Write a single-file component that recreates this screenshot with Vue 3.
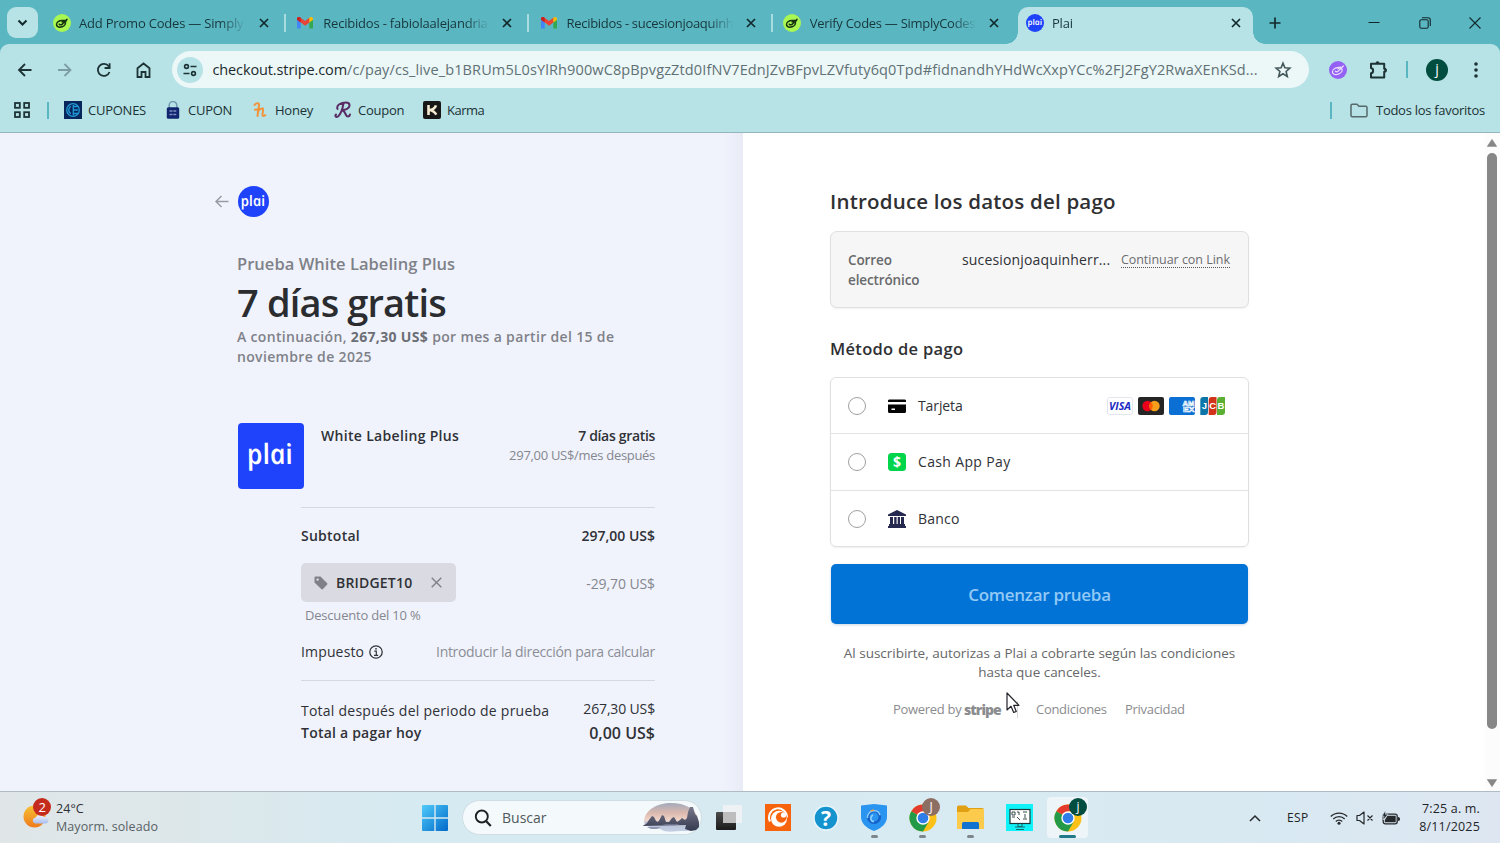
<script setup>
const tabs = [
  { title: 'Add Promo Codes — Simply', icon: 'simply', cls: 't1' },
  { title: 'Recibidos - fabiolaalejandria', icon: 'gmail', cls: 't2' },
  { title: 'Recibidos - sucesionjoaquinh', icon: 'gmail', cls: 't3' },
  { title: 'Verify Codes — SimplyCodes', icon: 'simply', cls: 't4' },
  { title: 'Plai', icon: 'plai', cls: 't5', active: true }
]

const bookmarks = [
  { name: 'CUPONES', icon: 'cupones' },
  { name: 'CUPON', icon: 'lock' },
  { name: 'Honey', icon: 'honey' },
  { name: 'Coupon', icon: 'coupon' },
  { name: 'Karma', icon: 'karma' }
]

const methods = [
  { name: 'Tarjeta', icon: 'card' },
  { name: 'Cash App Pay', icon: 'cash' },
  { name: 'Banco', icon: 'bank' }
]

const apps = [
  { icon: 'taskview' },
  { icon: 'crunchy' },
  { icon: 'help' },
  { icon: 'shield', running: true },
  { icon: 'chrome', running: true, badge: 'J' },
  { icon: 'folder', running: true },
  { icon: 'monitor' },
  { icon: 'chrome', active: true, badge: 'j' }
]
</script>

<template>
  <div class="screen">
    <!-- Tab strip -->
    <div class="tabstrip">
      <div class="tab-search">
        <svg width="31" height="31" viewBox="0 0 31 31"><path d="M11.5 13.5l4 4 4-4" fill="none" stroke="#12292c" stroke-width="2" /></svg>
      </div>
      <template v-for="(tab, i) in tabs" :key="i">
        <div class="tab" :class="{ active: tab.active }">
          <svg v-if="tab.icon === 'simply'" class="favicon" viewBox="0 0 18 18">
            <circle cx="9" cy="9" r="9" fill="#a9f752" />
            <g fill="none" stroke="#16330f" stroke-width="1.5" stroke-linecap="round">
              <ellipse cx="8" cy="9.8" rx="4.6" ry="3.2" transform="rotate(-20 8 9.8)" />
              <path d="M6.3 10.2c1 1.3 3 .5 4-1.2l3.7-3.8M9 7.8l2.2-1.4M11.5 8.6l2-2.2" />
            </g>
          </svg>
          <svg v-else-if="tab.icon === 'gmail'" class="favicon" viewBox="0 0 18 18">
            <path d="M1 5v9.5h3.7V8z" fill="#4285f4" />
            <path d="M17 5v9.5h-3.7V8z" fill="#34a853" />
            <path d="M1 4.8C1 3 3 2.4 4.3 3.4L9 7l4.7-3.600v4.8L9 11.7 4.7 8.3 1 5.8z" fill="#ea4335" />
            <path d="M13.3 3.7C15 2.4 17 3 17 5l-.1 1-3.6 2.6z" fill="#fbbc04" />
            <path d="M1 4.8C1 3 3 2.4 4.7 3.7v4.7L1 5.8z" fill="#c5221f" />
          </svg>
          <svg v-else class="favicon" viewBox="0 0 18 18">
            <circle cx="9" cy="9" r="9" fill="#1f43fb" />
            <text class="plai" transform="translate(2 11.2) skewX(12)" font-size="8" textLength="14.5" lengthAdjust="spacingAndGlyphs">plai</text>
          </svg>
          <span class="tab-title" :class="tab.cls">{{ tab.title }}</span>
          <svg class="tab-close" viewBox="0 0 10 10"><path d="M1 1l8 8M9 1l-8 8" stroke="#12292c" stroke-width="1.7" /></svg>
        </div>
        <span v-if="i < 4" class="tab-sep" :class="{ hidden: i === 3 }"></span>
      </template>
      <svg class="new-tab" viewBox="0 0 12 12"><path d="M6 .5v11M.5 6h11" stroke="#12292c" stroke-width="1.7" /></svg>
      <div class="window-controls">
        <svg viewBox="0 0 12 12"><path d="M.5 5.5h11" stroke="#12292c" /></svg>
        <svg viewBox="0 0 12 12"><g fill="none" stroke="#12292c" stroke-width="1.1"><rect x=".8" y="2.8" width="8.4" height="8.4" rx="1.5" /><path d="M3 .8h6a2.3 2.3 0 0 1 2.3 2.3V9" /></g></svg>
        <svg viewBox="0 0 12 12"><path d="M.5.5l11 11M11.5.5l-11 11" stroke="#12292c" stroke-width="1.1" /></svg>
      </div>
    </div>

    <!-- Toolbar -->
    <div class="chrome-body">
      <div class="toolbar">
        <div class="nav">
          <svg viewBox="0 0 20 20"><path d="M16.5 10H4.5M10 4l-6 6 6 6" fill="none" stroke="#1c3235" stroke-width="1.8" /></svg>
          <svg viewBox="0 0 20 20"><path d="M3 10h12M9.500 4l6 6-6 6" fill="none" stroke="#7c9da1" stroke-width="1.8" /></svg>
          <svg viewBox="0 0 20 20"><path d="M15.5 12a6 6 0 1 1-.8-5.7l1 1.3" fill="none" stroke="#1c3235" stroke-width="1.8" /><path d="M15.6 3.2v4.8h-5" fill="none" stroke="#1c3235" stroke-width="1.8" /></svg>
          <svg viewBox="0 0 20 20"><path d="M3.5 8.2L9.5 3.5l6 4.7V17h-4v-5h-4v5h-4z" fill="none" stroke="#1c3235" stroke-width="1.8" /></svg>
        </div>
        <div class="omnibox">
          <span class="site-info">
            <svg width="16" height="16" viewBox="0 0 16 16"><g fill="none" stroke="#1c3235" stroke-width="1.6"><circle cx="4.5" cy="4.5" r="1.9" /><path d="M8.5 4.5h6M1.5 11.5h6" /><circle cx="11.5" cy="11.5" r="1.9" /></g></svg>
          </span>
          <span class="url"><b>checkout.stripe.com</b>/c/pay/cs_live_b1BRUm5L0sYlRh900wC8pBpvgzZtd0IfNV7EdnJZvBFpvLZVfuty6q0Tpd#fidnandhYHdWcXxpYCc%2FJ2FgY2RwaXEnKSd...</span>
          <svg class="star" viewBox="0 0 18 18"><path d="M9 2.200l1.900 4.600 5 .4-3.800 3.300 1.200 4.900L9 12.700l-4.300 2.700 1.200-4.900L2.100 7.200l5-.4z" fill="none" stroke="#42575a" stroke-width="1.6" /></svg>
        </div>
        <svg class="ext" viewBox="0 0 18 18">
          <circle cx="9" cy="9" r="9" fill="#9461f4" />
          <g fill="none" stroke="#e9dcff" stroke-width="1.3" stroke-linecap="round">
            <ellipse cx="8.3" cy="10" rx="5" ry="3.3" transform="rotate(-20 8.3 10)" />
            <path d="M6.3 10.2c1 1.3 3 .5 4-1.2l4-4M9 7.8l2.2-1.8" />
          </g>
        </svg>
        <svg class="puzzle" viewBox="0 0 20 20"><path d="M2.5 3.800h13.200v5c2 0 2 3 0 3v5.700H2.500v-4.300c2.800-.4 2.800-4.700 0-5.100z" fill="none" stroke="#1c3235" stroke-width="2" stroke-linejoin="round" /><path d="M7 3.500a2 2.300 0 0 1 4 0zM16 8a2.200 2.200 0 0 1 0 4.500z" fill="#1c3235" /></svg>
        <span class="v-sep"></span>
        <span class="avatar">j</span>
        <svg class="kebab" viewBox="0 0 4 16"><g fill="#1c3235"><circle cx="2" cy="2" r="1.8" /><circle cx="2" cy="8" r="1.8" /><circle cx="2" cy="14" r="1.8" /></g></svg>
      </div>

      <!-- Bookmarks -->
      <div class="bookmarks">
        <svg class="apps-icon" viewBox="0 0 16 16"><g fill="none" stroke="#1c3235" stroke-width="1.8"><rect x="1" y="1" width="4.8" height="4.8" /><rect x="10.2" y="1" width="4.8" height="4.8" /><rect x="1" y="10.2" width="4.8" height="4.8" /><rect x="10.2" y="10.2" width="4.8" height="4.8" /></g></svg>
        <span class="v-sep"></span>
        <div class="bookmark-list">
          <div v-for="b in bookmarks" :key="b.name" class="bookmark" :class="b.icon">
            <svg v-if="b.icon === 'cupones'" viewBox="0 0 18 18"><rect width="18" height="18" fill="#06265c" /><g fill="none" stroke="#2299d6" stroke-width="1.3"><circle cx="9" cy="9" r="6.3" /><path d="M9.3 4v10.5M9.3 5.500h4.500M9.300 9h4.500M9.300 12.500h4.500M7 5.500c-3 1-3 6 0 7" /></g></svg>
            <svg v-else-if="b.icon === 'lock'" viewBox="0 0 18 18"><path d="M5.2 7V4.200a3.800 3.600 0 0 1 7.600 0V7" fill="none" stroke="#6f9ab0" stroke-width="1.5" /><rect x="2.8" y="6.2" width="12.4" height="11.5" rx="1.5" fill="#10246f" /><path d="M5.5 10h7M5.500 13.500h7" stroke="#7f8fc4" stroke-width="1.3" stroke-dasharray="3 .8" /></svg>
            <svg v-else-if="b.icon === 'honey'" viewBox="0 0 18 18"><path d="M3.5 4c2-2.500 5-2.500 4.500.5L6.500 15M7 10.500c1.500-3 5.500-4 5-.5-.3 2.500-1.200 5 .5 5 1 0 1.500-.5 1.800-1M4 8.800l8-1.300" fill="none" stroke="#f0943c" stroke-width="2" stroke-linecap="round" /></svg>
            <svg v-else-if="b.icon === 'coupon'" viewBox="0 0 18 18"><path d="M9.5 2.500C8.500 8 7 13 4 15.500c-2 1.200-3.300-.5-2-2M3.500 8C2 4 7 1.500 12 1.500c4.500 0 5 5-.5 7-1.500.5-3 .5-3.500.5 2.500.5 3 3 4 5 1 2.200 3.500 2 4-.5" fill="none" stroke="#5a2c66" stroke-width="2" stroke-linecap="round" /></svg>
            <svg v-else viewBox="0 0 18 18"><rect width="18" height="18" rx="2" fill="#171717" /><path d="M5.5 4v10M13 4.300c-1 3-3.500 4.500-7 4.700 3 .2 5.500 1.500 7.300 4.700" fill="none" stroke="#f4ead2" stroke-width="2.6" /></svg>
            <span>{{ b.name }}</span>
          </div>
        </div>
        <span class="v-sep"></span>
        <svg class="fav-folder" viewBox="0 0 18 15"><path d="M1 2.500A1.200 1.200 0 0 1 2.200 1.300H7l2 2h7A1.200 1.200 0 0 1 17 4.500v8A1.200 1.200 0 0 1 16 13.700H2.200A1.200 1.200 0 0 1 1 12.500z" fill="none" stroke="#56696b" stroke-width="1.5" /></svg>
        <span class="all-favs">Todos los favoritos</span>
      </div>
    </div>

    <!-- Checkout page -->
    <div class="page">
      <section class="summary">
        <div class="merchant">
          <svg width="14" height="13" viewBox="0 0 14 13"><path d="M13.5 6.5H1.2M6.5 1l-5.5 5.500 5.500 5.500" fill="none" stroke="#989ba3" stroke-width="1.5" /></svg>
          <svg width="31" height="31" viewBox="0 0 31 31"><circle cx="15.5" cy="15.5" r="15.5" fill="#1f43fb" /><text class="plai" transform="translate(3.5 19.5) skewX(12)" font-size="14.5" textLength="24.5" lengthAdjust="spacingAndGlyphs">plai</text></svg>
        </div>
        <div class="summary-body">
          <div class="product-name">Prueba White Labeling Plus</div>
          <div class="headline">7 días gratis</div>
          <div class="then">A continuación, <b>267,30 US$</b> por mes a partir del 15 de<br />noviembre de 2025</div>

          <div class="item">
            <svg width="66" height="66" viewBox="0 0 66 66"><rect width="66" height="66" rx="4" fill="#1f43fb" /><text class="plai" transform="translate(10.500 41) skewX(12)" font-size="28" textLength="46" lengthAdjust="spacingAndGlyphs">plai</text></svg>
            <span class="item-title">White Labeling Plus</span>
            <div class="item-price">
              <span class="free">7 días gratis</span>
              <span class="after">297,00 US$/mes después</span>
            </div>
          </div>

          <div class="totals">
            <div class="row subtotal"><span class="label">Subtotal</span><span class="value">297,00 US$</span></div>
            <div class="row promo">
              <span class="chip">
                <svg width="14" height="14" viewBox="0 0 14 14"><path d="M.5 1.800C.5 1 1 .5 1.800.5h4.700L13 7c.6.6.6 1.200 0 1.800L9 13c-.6.6-1.200.6-1.800 0L.5 6.500z" fill="#808188" /><circle cx="3.6" cy="3.6" r="1.2" fill="#dadbe2" /></svg>
                <span class="code">BRIDGET10</span>
                <svg width="11" height="11" viewBox="0 0 11 11"><path d="M.7.7l9.600 9.600M10.300.7L.7 10.300" stroke="#808188" stroke-width="1.4" /></svg>
              </span>
              <span class="discount">-29,70 US$</span>
            </div>
            <div class="promo-note">Descuento del 10 %</div>
            <div class="row tax">
              <span class="tax-label"><span>Impuesto</span><svg width="14" height="14" viewBox="0 0 14 14"><circle cx="7" cy="7" r="6.2" fill="none" stroke="#33353a" stroke-width="1.3" /><path d="M5.3 6.200h2v4M5 10.300h4.200" fill="none" stroke="#33353a" stroke-width="1.2" /><circle cx="7" cy="3.8" r=".9" fill="#33353a" /></svg></span>
              <span class="tax-value">Introducir la dirección para calcular</span>
            </div>
            <div class="row trial"><span class="label">Total después del periodo de prueba</span><span class="value">267,30 US$</span></div>
            <div class="row today"><span class="label">Total a pagar hoy</span><span class="value">0,00 US$</span></div>
          </div>
        </div>
      </section>

      <section class="payment">
        <h1>Introduce los datos del pago</h1>
        <div class="email-box">
          <span class="email-label">Correo<br />electrónico</span>
          <span class="email">sucesionjoaquinherr...</span>
          <span class="link">Continuar con Link</span>
        </div>
        <h2>Método de pago</h2>
        <div class="methods">
          <div v-for="m in methods" :key="m.icon" class="method">
            <span class="radio"></span>
            <svg v-if="m.icon === 'card'" class="m-icon" viewBox="0 0 18 18"><path d="M0 3.500a1.500 1.500 0 0 1 1.500-1h15a1.500 1.500 0 0 1 1.500 1V5H0zM0 7.500h18V14.500a1.500 1.500 0 0 1-1.500 1.500h-15a1.500 1.500 0 0 1-1.500-1.500zM3.500 11.500v1.500h3.500v-1.500z" fill-rule="evenodd" fill="#050505" /></svg>
            <svg v-else-if="m.icon === 'cash'" class="m-icon" viewBox="0 0 18 18"><rect width="18" height="18" rx="3.5" fill="#00d54b" /><text x="9" y="14" text-anchor="middle" font-family="Open Sans" font-weight="700" font-size="14" fill="#fff">$</text></svg>
            <svg v-else class="m-icon" viewBox="0 0 18 18"><path d="M9 0l9 4.500V6H0V4.500zM2 7h3v7H2zM6.200 7h2.400v7H6.200zM9.700 7H12v7H9.700zM13 7h3v7h-3zM1 14h16v2H1zM0 16h18v2H0z" fill="#25284f" /></svg>
            <span class="m-name" :class="m.icon">{{ m.name }}</span>
            <div v-if="m.icon === 'card'" class="brands">
              <svg viewBox="0 0 26 18"><rect x=".5" y=".5" width="25" height="17" rx="2" fill="#fff" stroke="#e3e5ee" /><text x="2" y="12.6" font-family="Open Sans" font-weight="700" font-style="italic" font-size="10" textLength="22" lengthAdjust="spacingAndGlyphs" fill="#1a2ac4">VISA</text></svg>
              <svg viewBox="0 0 26 18"><rect width="26" height="18" rx="2" fill="#252525" /><circle cx="9.5" cy="9" r="5.2" fill="#eb001b" /><circle cx="16.5" cy="9" r="5.2" fill="#f79e1b" /><path d="M13 5.100a5.200 5.200 0 0 1 0 7.800 5.200 5.200 0 0 1 0-7.800z" fill="#ff5f00" /></svg>
              <svg viewBox="0 0 26 18"><rect width="26" height="18" rx="2" fill="#0b6fd4" /><g font-family="Liberation Sans" font-weight="700" font-size="8" fill="#0b6fd4" stroke="#fff" stroke-width=".7"><text x="13.5" y="9" textLength="12" lengthAdjust="spacingAndGlyphs">AM</text><text x="14" y="15.4" textLength="11.5" lengthAdjust="spacingAndGlyphs">EX</text></g></svg>
              <svg viewBox="0 0 26 18"><path d="M3 0h5v15a3 3 0 0 1-3 3H.3V3A3 3 0 0 1 3 0z" fill="#0d76a8" /><path d="M11.700 0h4.800v15a3 3 0 0 1-3 3H8.700V3a3 3 0 0 1 3-3z" fill="#d1331b" /><path d="M20 0h5v15a3 3 0 0 1-3 3h-5V3a3 3 0 0 1 3-3z" fill="#5bb033" /><g font-family="Liberation Sans" font-weight="700" font-size="9.5" text-anchor="middle" fill="#fff"><text x="4.500" y="12.3">J</text><text x="12.600" y="12.3">C</text><text x="21" y="12.3">B</text></g></svg>
            </div>
          </div>
        </div>
        <div class="submit">Comenzar prueba</div>
        <p class="terms">Al suscribirte, autorizas a Plai a cobrarte según las condiciones<br />hasta que canceles.</p>
        <div class="footer">
          <span class="powered">Powered by</span><span class="stripe">stripe</span><span class="f-sep"></span><span class="cond">Condiciones</span><span class="priv">Privacidad</span>
        </div>
      </section>

      <div class="scrollbar">
        <svg width="10" height="8" viewBox="0 0 10 8"><path d="M5 .3L9.800 7.500H.2z" fill="#878787" stroke="#878787" stroke-width=".5" stroke-linejoin="round" /></svg>
        <span class="thumb"></span>
        <svg width="10" height="8" viewBox="0 0 10 8"><path d="M5 7.700L9.800.5H.2z" fill="#878787" stroke="#878787" stroke-width=".5" stroke-linejoin="round" /></svg>
      </div>

      <svg class="cursor" viewBox="0 0 14 22"><path d="M1 1v17l4-3.700 2.700 6.200 2.600-1.100L7.700 13.300h5.300z" fill="#fff" stroke="#23232b" stroke-width="1.2" stroke-linejoin="round" /></svg>
    </div>

    <!-- Taskbar -->
    <div class="taskbar">
      <div class="weather">
        <svg width="30" height="32" viewBox="0 0 30 32">
          <defs>
            <linearGradient id="sun" x1="0" y1="0" x2="0" y2="1"><stop offset="0" stop-color="#f7c234" /><stop offset="1" stop-color="#ee7a1c" /></linearGradient>
            <linearGradient id="cloud" x1="0" y1="0" x2="0" y2="1"><stop offset="0" stop-color="#f2f5ff" /><stop offset="1" stop-color="#a9bdec" /></linearGradient>
          </defs>
          <circle cx="12.5" cy="18.5" r="11" fill="url(#sun)" />
          <path d="M13 25.500a3 3 0 0 1 .6-5.900 4.500 4.500 0 0 1 8.200-.6 3.300 3.300 0 0 1 2.200 6.500z" fill="url(#cloud)" />
          <circle cx="20" cy="9" r="9" fill="#c42b1c" />
          <text x="20.2" y="13.7" text-anchor="middle" font-family="Open Sans" font-size="13" fill="#fff">2</text>
        </svg>
        <div class="weather-text"><span class="temp">24°C</span><span class="sky">Mayorm. soleado</span></div>
      </div>

      <svg class="start" viewBox="0 0 26 26">
        <defs><linearGradient id="win" x1="0" y1="0" x2="1" y2="1"><stop offset="0" stop-color="#4fcbfb" /><stop offset="1" stop-color="#0269c9" /></linearGradient></defs>
        <path d="M0 1a1 1 0 0 1 1-1h11.300v12.300H0zM13.700 0H25a1 1 0 0 1 1 1v11.300H13.700zM0 13.700h12.300V26H1a1 1 0 0 1-1-1zM13.700 13.700H26V25a1 1 0 0 1-1 1H13.700z" fill="url(#win)" />
      </svg>

      <div class="search">
        <svg width="18" height="18" viewBox="0 0 18 18"><circle cx="7.8" cy="7.5" r="6" fill="none" stroke="#1e2224" stroke-width="1.9" /><path d="M12 12l4.800 5" stroke="#1e2224" stroke-width="2.2" /></svg>
        <span class="search-label">Buscar</span>
        <svg class="scene" viewBox="0 0 56 30">
          <defs>
            <linearGradient id="dusk" x1="0" y1="0" x2="0" y2="1"><stop offset="0" stop-color="#a3abba" /><stop offset=".35" stop-color="#dcb9ae" /><stop offset=".6" stop-color="#efd5c8" /><stop offset=".7" stop-color="#b8bfd4" /><stop offset="1" stop-color="#c3d0e4" /></linearGradient>
            <linearGradient id="rock" x1="0" y1="0" x2="0" y2="1"><stop offset="0" stop-color="#77788a" /><stop offset="1" stop-color="#353a50" /></linearGradient>
          </defs>
          <path d="M1 18C2 7 14 0 28 0s25 6 27 16c2 9-5 12-14 12-8 0-18 2-22-1S1 26 1 18z" fill="url(#dusk)" />
          <path d="M0 23c1-2 3-1 4-3l2-3 3-4 2 1 2 4 2 1 2-3 2-4 2 1 2 6h3l3-4 2-1 3 5 3-2 2-2 3 2 2-2 1-6 2-5h3l2 7 2 2 2 6 1 4-4 4-5 1-6-2 1-4z" fill="url(#rock)" />
          <path d="M4 24h14l-4 2H8zM19 21.500h18l-8 1.500z" fill="#8f97b2" />
        </svg>
      </div>

      <div class="apps">
        <div v-for="(app, i) in apps" :key="i" class="app" :class="{ active: app.active }">
          <svg v-if="app.icon === 'taskview'" width="28" height="26" viewBox="0 0 28 26">
            <defs><linearGradient id="tv" x1="0" y1="0" x2="0" y2="1"><stop offset="0" stop-color="#4b4b4b" /><stop offset="1" stop-color="#1b1b1b" /></linearGradient></defs>
            <rect x="2" y="7" width="20" height="18" rx="1" fill="url(#tv)" /><rect x="9" y="0" width="19" height="18" rx="1" fill="#f2f3f4" opacity=".85" /><rect x="9" y="7" width="13" height="11" fill="#bdbdbd" />
          </svg>
          <svg v-else-if="app.icon === 'crunchy'" width="26" height="27" viewBox="0 0 26 27"><rect width="26" height="27" fill="#f8640d" /><path d="M5 17.500A9 9 0 1 1 22 13.500" fill="none" stroke="#fff" stroke-width="2" /><circle cx="14" cy="14.8" r="8" fill="#fff" /><circle cx="16.3" cy="13.3" r="5.4" fill="#f8640d" /><circle cx="18.5" cy="11" r="2.6" fill="#fff" /></svg>
          <svg v-else-if="app.icon === 'help'" width="26" height="26" viewBox="0 0 26 26"><circle cx="13" cy="13" r="12" fill="#1593cf" stroke="#e9f6fc" stroke-width="1.5" /><text x="13" y="20.5" text-anchor="middle" font-family="Open Sans" font-weight="700" font-size="21" fill="#fff">?</text></svg>
          <svg v-else-if="app.icon === 'shield'" width="26" height="27" viewBox="0 0 26 27"><path d="M0 1.500L13 0l13 1.500V13c0 6-5 11-13 14C5 24 0 19 0 13z" fill="#2a94f1" /><circle cx="13" cy="13" r="5.8" fill="none" stroke="#1462c9" stroke-width="2.6" /><path d="M6.500 14A6.500 6.500 0 0 1 13 6.700c3-.2 5.500 2 6 4.500M13 17.500c-4 0-4-5-1-6.500" fill="none" stroke="#8ed0ff" stroke-width="1.5" /><path d="M9.500 6.800l3.500-.8" stroke="#f0a04b" stroke-width="1.3" /></svg>
          <svg v-else-if="app.icon === 'chrome'" class="chrome-icon" width="28" height="28" viewBox="0 0 28 28">
            <circle cx="14" cy="14" r="13.5" fill="#fbc116" />
            <path d="M14 14L2.300 7.250A13.500 13.500 0 0 1 25.700 7.250H14z" fill="#e33b2e" />
            <path d="M14 14L2.300 7.250A13.500 13.500 0 0 0 14 27.500l5.800-10z" fill="#229a48" />
            <circle cx="14" cy="14" r="6.7" fill="#fff" /><circle cx="14" cy="14" r="5.3" fill="#2f7de9" />
          </svg>
          <svg v-else-if="app.icon === 'folder'" width="27" height="25" viewBox="0 0 27 25">
            <path d="M0 2a1.500 1.500 0 0 1 1.500-1.500H9L11.500 3H25a2 2 0 0 1 2 2v18.500H0z" fill="#e0a011" />
            <path d="M0 7h11l2.500-3H27v19a1 1 0 0 1-1 1H1a1 1 0 0 1-1-1z" fill="#fccb4b" />
            <path d="M5 24v-5.500A1.500 1.500 0 0 1 6.500 17h14a1.500 1.500 0 0 1 1.500 1.500V24z" fill="#1272cf" />
          </svg>
          <svg v-else width="27" height="27" viewBox="0 0 27 27"><rect width="27" height="27" fill="#0ff3f8" /><rect x="4" y="5.5" width="20" height="14" fill="#fff" stroke="#1c3a3c" stroke-width="1.2" /><path d="M6 8h3v3H6zM6 13h3M11 8h2v3M17 8h4M19 10v4M11 13l3 3M17 15h4" fill="none" stroke="#394b4d" stroke-width="1" /><path d="M12 20v2.500h4V20M9 23h10M10 25.500h8" stroke="#166d70" stroke-width="1.1" fill="none" /></svg>
          <span v-if="app.badge" class="badge" :class="{ green: app.active }">{{ app.badge }}</span>
          <span v-if="app.running || app.active" class="dot"></span>
        </div>
      </div>

      <div class="tray">
        <svg class="chev" viewBox="0 0 12 8"><path d="M1 7l5-5 5 5" fill="none" stroke="#25292b" stroke-width="1.5" /></svg>
        <span class="lang">ESP</span>
        <svg class="wifi" viewBox="0 0 18 14"><g fill="none" stroke="#25292b" stroke-width="1.3"><path d="M.8 5.500a11.500 11.500 0 0 1 16.400 0M3.300 8a8 8 0 0 1 11.400 0M5.800 10.500a4.500 4.500 0 0 1 6.400 0" /></g><circle cx="9" cy="12.2" r="1.5" fill="#25292b" /></svg>
        <svg class="mute" viewBox="0 0 18 14"><path d="M1 4.500h2.500L8 1v12L3.500 9.500H1zM11.500 4.500l5 5M16.500 4.500l-5 5" fill="none" stroke="#25292b" stroke-width="1.2" stroke-linejoin="round" /></svg>
        <svg class="battery" viewBox="0 0 18 14"><rect x="1.2" y="3.2" width="14" height="9.6" rx="2" fill="none" stroke="#25292b" stroke-width="1.3" /><path d="M5.500 4.800h8.200v6.400H2.800V9z" fill="#25292b" /><path d="M16 6v4c1.500 0 2-1 2-2s-.5-2-2-2z" fill="#25292b" /><path d="M3.500-.5L0 5h2l-.7 4L6 3.300H3.500z" fill="#25292b" stroke="#d9e8f2" stroke-width=".6" /></svg>
        <div class="clock"><span class="time">7:25 a. m.</span><span class="date">8/11/2025</span></div>
      </div>
    </div>
  </div>
</template>

<style>
body {
  margin: 0;
}
</style>

<style scoped>
.screen {
  width: 1500px;
  height: 843px;
  display: flex;
  flex-direction: column;
  overflow: hidden;
  background: #5ab6c1;
  font-family: 'Open Sans', 'Noto Sans', sans-serif;
  font-size: 14px;
  color: #2f3136;
  white-space: nowrap;
}

svg {
  display: block;
  flex: none;
}

/* Slanted face has the single-storey "a"; the skew on each text sets it upright */
.plai {
  font-family: 'Open Sans', sans-serif;
  font-style: italic;
  font-weight: 600;
  fill: #fff;
}

/* Tab strip */
.tabstrip {
  height: 44px;
  flex: none;
  display: flex;
  align-items: flex-start;
  padding-left: 7px;
}

.tab-search {
  width: 31px;
  height: 31px;
  margin: 7px 7px 0 0;
  border-radius: 9px;
  background: #b7e2e6;
}

.tab {
  width: 235px;
  height: 37px;
  margin-top: 7px;
  padding: 0 11px 5px 8px;
  box-sizing: border-box;
  display: flex;
  align-items: center;
  flex: none;
}

.tab.active {
  position: relative;
  background: #b7e2e6;
  border-radius: 10px 10px 0 0;
}

/* Flared bottom corners of the selected tab */
.tab.active::before,
.tab.active::after {
  content: '';
  position: absolute;
  bottom: 0;
  width: 12px;
  height: 12px;
}

.tab.active::before {
  left: -12px;
  background: radial-gradient(circle at 0 0, transparent 11.5px, #b7e2e6 12px);
}

.tab.active::after {
  right: -12px;
  background: radial-gradient(circle at 100% 0, transparent 11.5px, #b7e2e6 12px);
}

.favicon {
  width: 18px;
  height: 18px;
}

.tab-title {
  width: 167px;
  margin: 0 12px 1px 8px;
  font-size: 13px;
  line-height: 20px;
  color: #17373b;
  mask-image: linear-gradient(to right, #000 142px, transparent 167px);
}

.t1 {
  letter-spacing: -0.2px;
}

.t2 {
  margin-left: 9px;
  letter-spacing: -0.2px;
}

.t3 {
  margin-left: 9px;
  letter-spacing: -0.3px;
}

.t4 {
  margin-left: 9px;
  letter-spacing: -0.28px;
}

.t2,
.t3,
.t4 {
  margin-right: 11px;
}

.t5 {
  margin-right: 11px;
  letter-spacing: -0.2px;
}

.tab-close {
  width: 10px;
  height: 10px;
  margin-left: 1px;
}

.tab-sep {
  width: 2px;
  height: 18px;
  margin: 14px 2.25px 0 4px;
  background: #a9dce1;
}

.tab-sep.hidden {
  background: none;
}

.new-tab {
  width: 12px;
  height: 12px;
  margin: 16.5px 0 0 16px;
}

.window-controls {
  display: flex;
  gap: 38.5px;
  margin: 16.5px 0 0 auto;
  padding-right: 19px;
}

.window-controls svg {
  width: 12px;
  height: 12px;
}

/* Toolbar */
.chrome-body {
  height: 89px;
  flex: none;
  box-sizing: border-box;
  background: #b7e2e6;
  border-bottom: 1px solid #93b5bb;
  border-radius: 9px 9px 0 0;
}

.toolbar {
  height: 51px;
  display: flex;
  align-items: center;
}

.nav {
  width: 172px;
  box-sizing: border-box;
  padding-left: 15px;
  display: flex;
  gap: 19.5px;
}

.nav svg {
  width: 20px;
  height: 20px;
}

.omnibox {
  width: 1137px;
  height: 37px;
  box-sizing: border-box;
  padding: 0 17px 0 5px;
  border-radius: 19px;
  background: #ecf7f8;
  display: flex;
  align-items: center;
  margin-right: 20px;
}

.site-info {
  width: 26px;
  height: 26px;
  border-radius: 50%;
  background: #b7e2e6;
  display: flex;
  align-items: center;
  justify-content: center;
}

.url {
  margin-left: 9.5px;
  font-size: 14.5px;
  letter-spacing: 0.125px;
  color: #5f7174;
}

.url b {
  font-weight: 400;
  letter-spacing: -0.12px;
  color: #1c2b2d;
}

.star {
  width: 18px;
  height: 18px;
  margin-left: auto;
}

.ext {
  width: 18px;
  height: 18px;
}

.puzzle {
  width: 21px;
  height: 20px;
  margin-left: 21px;
}

.v-sep {
  width: 2px;
  height: 17px;
  background: #5ab6c1;
}

.toolbar .v-sep {
  margin: 0 18px 0 17px;
}

.avatar {
  width: 22px;
  height: 22px;
  border-radius: 50%;
  background: #014d40;
  color: #fff;
  font-size: 14px;
  line-height: 20px;
  text-align: center;
}

.kebab {
  width: 4px;
  height: 16px;
  margin-left: 26px;
}

.bookmarks {
  height: 30px;
  display: flex;
  align-items: center;
  padding: 0 15px 0 14px;
  font-size: 13px;
  color: #1c3235;
}

.apps-icon {
  width: 16px;
  height: 16px;
  margin-right: 16.5px;
}

.bookmark-list {
  display: grid;
  grid-template-columns: 100px 87px 83px 89px 80px;
  margin: 0 auto 0 15.5px;
}

.bookmark {
  display: flex;
  align-items: center;
  gap: 6px;
  letter-spacing: -0.25px;
}

.bookmark.karma {
  letter-spacing: -0.5px;
}

.bookmark svg {
  width: 18px;
  height: 18px;
}

.fav-folder {
  width: 18px;
  height: 15px;
  margin: 0 8px 0 18px;
}

.all-favs {
  width: 109px;
  letter-spacing: -0.28px;
}

/* Page */
.page {
  position: relative;
  height: 658px;
  flex: none;
  display: flex;
  background: #fff;
}

.summary {
  width: 743px;
  box-sizing: border-box;
  padding: 53px 0 0 215px;
  background: linear-gradient(to right, #f0f3fc 722px, #e9ecf6 743px);
}

.merchant {
  display: flex;
  align-items: center;
  gap: 8.5px;
}

.summary-body {
  width: 418px;
  margin-left: 22px;
}

.product-name {
  height: 24px;
  margin-top: 35px;
  line-height: 23px;
  font-size: 16.5px;
  font-weight: 600;
  letter-spacing: 0.04px;
  color: #7f8188;
}

.headline {
  height: 52px;
  line-height: 52px;
  font-size: 38px;
  font-weight: 600;
  letter-spacing: -0.85px;
  color: #2b2c2f;
}

.then {
  margin-top: -1px;
  font-size: 14px;
  line-height: 19.5px;
  font-weight: 600;
  letter-spacing: 0.34px;
  color: #7f8188;
}

.then b {
  font-weight: 700;
  color: #6c6e75;
}

.item {
  margin-top: 57px;
  height: 84px;
  display: flex;
  align-items: flex-start;
  box-sizing: border-box;
  padding-left: 1px;
}

.item-title {
  margin-left: 17px;
  font-weight: 600;
  line-height: 26px;
  letter-spacing: 0.32px;
}

.item-price {
  margin-left: auto;
  display: flex;
  flex-direction: column;
  align-items: flex-end;
}

.free {
  font-weight: 600;
  line-height: 26px;
  letter-spacing: -0.32px;
}

.after {
  line-height: 12px;
  font-size: 13px;
  letter-spacing: -0.3px;
  color: #85878f;
}

.totals {
  margin-left: 64px;
  border-top: 1px solid #d5d8e1;
}

.row {
  display: flex;
  justify-content: space-between;
  align-items: center;
}

.subtotal {
  height: 55px;
  font-weight: 600;
}

.subtotal .label {
  letter-spacing: 0.25px;
}

.promo {
  height: 39px;
}

.chip {
  width: 155px;
  height: 39px;
  box-sizing: border-box;
  padding: 0 14px 0 13px;
  border-radius: 5px;
  background: #dadbe2;
  display: flex;
  align-items: center;
}

.code {
  margin: 0 auto 0 8px;
  font-weight: 600;
  letter-spacing: 0.2px;
}

.discount {
  margin-top: 2px;
  letter-spacing: -0.1px;
  color: #85878f;
}

.promo-note {
  height: 26px;
  padding-left: 4px;
  line-height: 26px;
  font-size: 13px;
  letter-spacing: -0.2px;
  color: #85878f;
}

.tax {
  height: 52px;
  border-bottom: 1px solid #d5d8e1;
  align-items: flex-start;
  line-height: 48px;
}

.tax-label {
  display: flex;
  align-items: center;
  gap: 5px;
  letter-spacing: 0.15px;
}

.tax-value {
  letter-spacing: -0.31px;
  color: #8c8e96;
}

.trial {
  height: 22px;
  margin-top: 19px;
  line-height: 22px;
}

.trial .label {
  letter-spacing: 0.24px;
}

.trial .value {
  padding-bottom: 4px;
  letter-spacing: -0.15px;
}

.today {
  height: 21px;
  font-weight: 600;
}

.today .label {
  letter-spacing: 0.22px;
}

.today .value {
  font-size: 16px;
}

/* Payment form */
.payment {
  width: 419px;
  margin-left: 87px;
  padding-top: 53px;
}

h1,
h2 {
  margin: 0;
  font-weight: 600;
  color: #2f3033;
}

h1 {
  height: 45px;
  line-height: 31px;
  font-size: 20.5px;
  letter-spacing: 0.2px;
}

.email-box {
  height: 77px;
  box-sizing: border-box;
  border: 1px solid #e0e0e0;
  border-radius: 7px;
  background: #f6f6f6;
  box-shadow: 0 1px 2px rgba(0, 0, 0, 0.06);
  padding: 18px 18px 0 17px;
  display: flex;
  line-height: 20px;
}

.email-label {
  width: 114px;
  font-size: 13.5px;
  font-weight: 600;
  letter-spacing: -0.12px;
  color: #68696c;
}

.email {
  letter-spacing: 0.15px;
}

.link {
  height: 15px;
  margin: 2px 0 0 auto;
  line-height: 16px;
  font-size: 12.5px;
  letter-spacing: -0.03px;
  color: #6c6d70;
  border-bottom: 1px dotted #55565a;
}

h2 {
  height: 69px;
  padding: 29px 0 0;
  box-sizing: border-box;
  line-height: 24px;
  font-size: 16.5px;
  letter-spacing: 0.3px;
}

.methods {
  border: 1px solid #e0e0e0;
  border-radius: 6px;
  box-shadow: 0 1px 2px rgba(0, 0, 0, 0.06);
}

.method {
  height: 55px;
  box-sizing: border-box;
  display: flex;
  align-items: center;
  padding: 0 22px 0 17px;
}

.method + .method {
  height: 57px;
  border-top: 1px solid #e3e3e3;
}

.method:last-child {
  height: 56px;
}

.radio {
  width: 18px;
  height: 18px;
  box-sizing: border-box;
  border: 1px solid #a0a0a0;
  border-radius: 50%;
}

.m-icon {
  width: 18px;
  height: 18px;
  margin: 0 12.5px 0 21.5px;
}

.m-name.card {
  letter-spacing: -0.1px;
}

.m-name.cash {
  margin-bottom: 1px;
  letter-spacing: 0.35px;
}

.m-name.bank {
  letter-spacing: 0.2px;
}

.brands {
  margin-left: auto;
  display: flex;
  gap: 5px;
}

.brands svg {
  width: 26px;
  height: 18px;
}

.submit {
  height: 60px;
  margin: 17px 1px 0;
  border-radius: 5px;
  background: #0173d6;
  box-shadow: 0 1px 3px rgba(0, 60, 120, 0.2);
  line-height: 61px;
  text-align: center;
  font-size: 17px;
  font-weight: 600;
  letter-spacing: -0.28px;
  color: #93c9f5;
}

.terms {
  margin: 20px 0 0;
  line-height: 19px;
  font-size: 13.5px;
  letter-spacing: -0.015px;
  text-align: center;
  color: #666769;
}

.footer {
  height: 20px;
  margin-top: 17px;
  padding-left: 63px;
  display: flex;
  align-items: center;
  font-size: 13px;
  letter-spacing: -0.3px;
  color: #8b8c8f;
}

.powered {
  width: 71px;
}

.stripe {
  width: 37px;
  font-weight: 800;
  font-size: 14px;
  letter-spacing: -0.95px;
}

.f-sep {
  width: 1px;
  height: 17px;
  margin: 0 18px 0 16px;
  background: #d8d8da;
}

.cond {
  width: 89px;
}

.scrollbar {
  width: 15px;
  height: 658px;
  box-sizing: border-box;
  margin-left: auto;
  padding: 6px 1px 4px 0;
  background: #fcfcfc;
  display: flex;
  flex-direction: column;
  align-items: center;
}

.thumb {
  width: 10px;
  height: 576px;
  margin: 6px 0 auto;
  border-radius: 5px;
  background: #878787;
}

.cursor {
  position: absolute;
  left: 1006px;
  top: 559px;
  width: 14px;
  height: 22px;
}

/* Taskbar */
.taskbar {
  height: 52px;
  flex: none;
  box-sizing: border-box;
  border-top: 1px solid #b0bcc4;
  background: linear-gradient(to right, #e0e6e8 0, #dde7ea 180px, #d6eaf1 400px, #d8eaf2 1000px, #d8e9f2 1250px, #dde6f1 1500px);
  display: flex;
  align-items: center;
}

.weather {
  width: 422px;
  display: flex;
}

.weather svg {
  margin: -2px 4px 0 22px;
}

.weather-text {
  display: flex;
  flex-direction: column;
  font-size: 12.5px;
  line-height: 18px;
  letter-spacing: 0.07px;
}

.sky {
  color: #596266;
}

.start {
  width: 26px;
  height: 26px;
}

.search {
  width: 240px;
  height: 35px;
  margin-left: 14px;
  box-sizing: border-box;
  padding: 0 2px 0 11px;
  border: 1px solid #cfdde3;
  border-radius: 18px;
  background: #f4fafc;
  display: flex;
  align-items: center;
}

.search-label {
  margin-left: 10px;
  color: #50585b;
}

.scene {
  width: 56px;
  height: 30px;
  margin-left: auto;
}

.apps {
  display: flex;
  margin-left: 5px;
  gap: 7.3px;
}

.app {
  position: relative;
  width: 41px;
  height: 41px;
  display: flex;
  align-items: center;
  justify-content: center;
}

.app:first-child {
  margin-right: 2px;
}

.app.active {
  border-radius: 4px;
  background: #edf5f9;
}

.badge {
  position: absolute;
  left: 20px;
  top: 1px;
  width: 18px;
  height: 18px;
  border-radius: 50%;
  background: #8d6e63;
  color: #fff;
  font-size: 12px;
  line-height: 17px;
  text-align: center;
}

.badge.green {
  left: 22px;
  background: #014d40;
}

.dot {
  position: absolute;
  left: 17px;
  bottom: 0;
  width: 7px;
  height: 3px;
  border-radius: 2px;
  background: #7d878c;
}

.app.active .dot {
  left: 12px;
  width: 17px;
  background: #207a87;
}

.tray {
  margin-left: auto;
  padding-right: 20px;
  display: flex;
  align-items: center;
  font-size: 12px;
  color: #1f2426;
}

.chev {
  width: 12px;
  height: 8px;
}

.lang {
  width: 22px;
  margin-left: 26px;
  letter-spacing: 0.35px;
}

.wifi {
  width: 18px;
  height: 14px;
  margin-left: 21px;
}

.mute {
  width: 18px;
  height: 14px;
  margin-left: 8px;
}

.battery {
  width: 18px;
  height: 14px;
  margin-left: 8px;
}

.clock {
  width: 80px;
  display: flex;
  flex-direction: column;
  text-align: right;
  font-size: 12.5px;
  line-height: 18px;
  letter-spacing: 0.18px;
}
</style>
